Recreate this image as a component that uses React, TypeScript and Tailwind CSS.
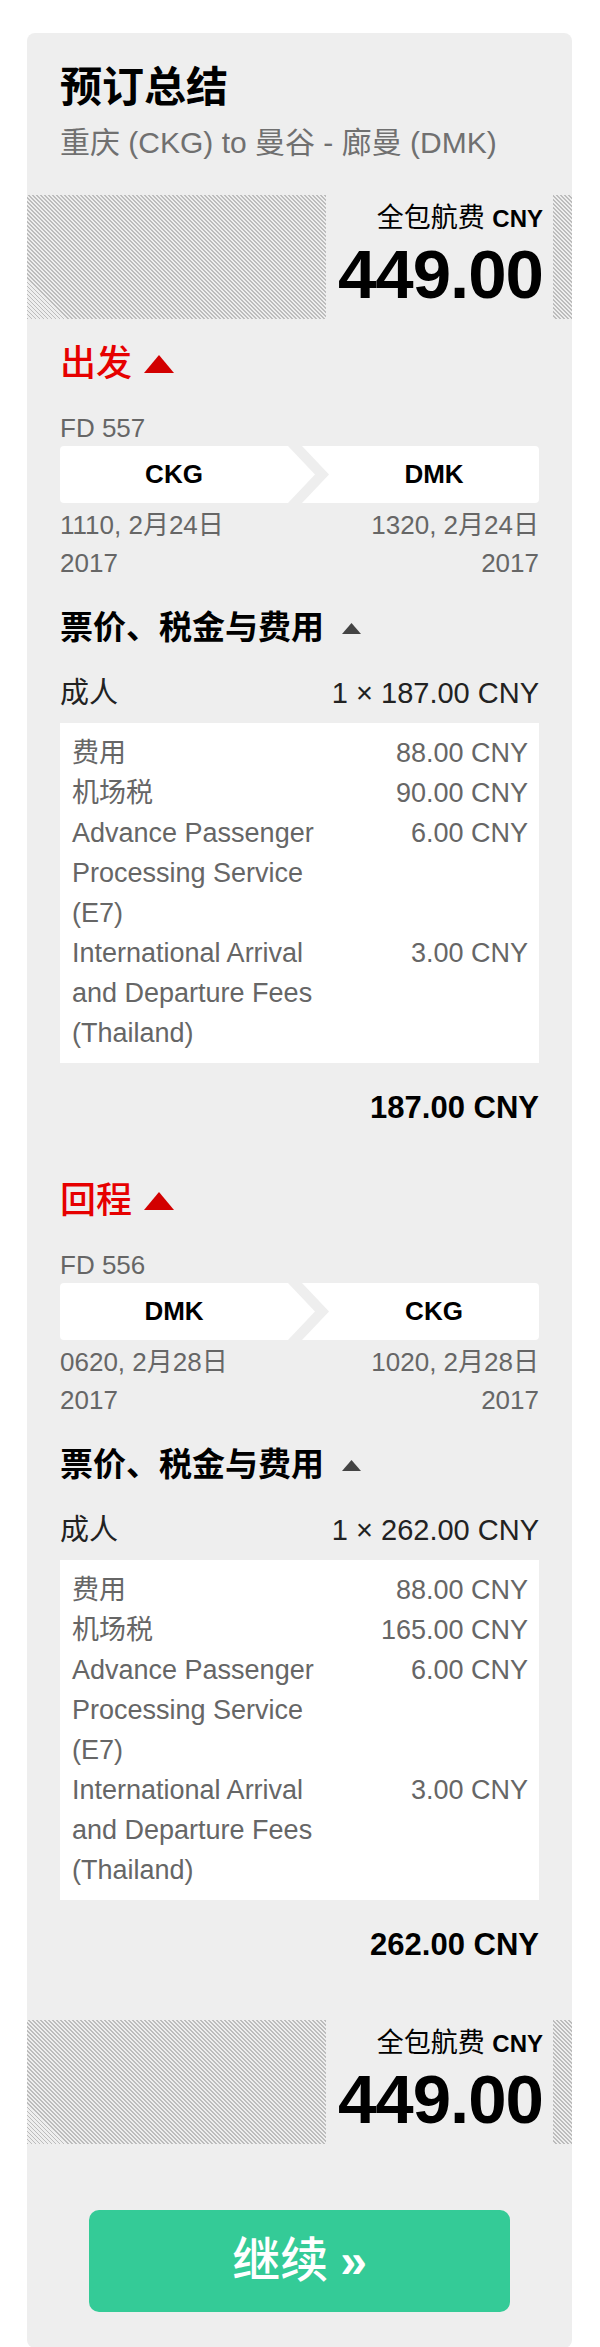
import React from "react";

const FONT = "font-['Liberation_Sans','Noto_Sans_CJK_SC',sans-serif]";
const HATCH =
  "bg-[repeating-linear-gradient(45deg,#bcbcbc_0px,#bcbcbc_1.4px,#eeeeee_1.4px,#eeeeee_2.83px)]";

type Fee = { label: string; amount: string };

type Leg = {
  title: string;
  flight: string;
  from: string;
  to: string;
  depart: [string, string];
  arrive: [string, string];
  adult: string;
  fees: Fee[];
  total: string;
};

const LEGS: Leg[] = [
  {
    title: "出发",
    flight: "FD 557",
    from: "CKG",
    to: "DMK",
    depart: ["1110, 2月24日", "2017"],
    arrive: ["1320, 2月24日", "2017"],
    adult: "1 × 187.00 CNY",
    fees: [
      { label: "费用", amount: "88.00 CNY" },
      { label: "机场税", amount: "90.00 CNY" },
      { label: "Advance Passenger Processing Service (E7)", amount: "6.00 CNY" },
      { label: "International Arrival and Departure Fees (Thailand)", amount: "3.00 CNY" },
    ],
    total: "187.00 CNY",
  },
  {
    title: "回程",
    flight: "FD 556",
    from: "DMK",
    to: "CKG",
    depart: ["0620, 2月28日", "2017"],
    arrive: ["1020, 2月28日", "2017"],
    adult: "1 × 262.00 CNY",
    fees: [
      { label: "费用", amount: "88.00 CNY" },
      { label: "机场税", amount: "165.00 CNY" },
      { label: "Advance Passenger Processing Service (E7)", amount: "6.00 CNY" },
      { label: "International Arrival and Departure Fees (Thailand)", amount: "3.00 CNY" },
    ],
    total: "262.00 CNY",
  },
];

function TotalBand() {
  return (
    <div className={`flex h-[124px] ${HATCH}`}>
      <div className="ml-auto mr-[19px] flex w-[227px] flex-col items-end bg-[#eeeeee] pr-[10px] pt-[8px] text-black">
        <div className="text-[27px] leading-[30px]">
          全包航费 <span className="text-[24px] font-bold">CNY</span>
        </div>
        <div className="mt-[6px] text-[69px] font-bold leading-[69px] tracking-[-1px]">449.00</div>
      </div>
    </div>
  );
}

function RouteBar({ from, to }: { from: string; to: string }) {
  return (
    <div className="mt-px flex h-[57px] rounded-[4px] bg-white text-[26px] font-bold text-black">
      <div className="flex w-[228px] items-center justify-center">{from}</div>
      <svg width="41" height="57" viewBox="0 0 41 57" aria-hidden>
        <polygon points="0,0 14,0 41,28.5 14,57 0,57 27,28.5" fill="#eeeeee" />
      </svg>
      <div className="flex flex-1 items-center justify-center">{to}</div>
    </div>
  );
}

function LegBlock({ leg, first }: { leg: Leg; first: boolean }) {
  return (
    <div className={first ? "mt-[24px]" : "mt-[52px]"}>
      <div className="flex h-[42px] items-center text-[36px] font-medium text-[#e60000]">
        {leg.title}
        <svg width="30" height="18" viewBox="0 0 30 18" className="ml-[12px]" aria-hidden>
          <polygon points="15,0 30,18 0,18" fill="#d20000" />
        </svg>
      </div>

      <div className="mt-[26px] text-[26px] leading-[34px] text-[#666666]">{leg.flight}</div>

      <RouteBar from={leg.from} to={leg.to} />

      <div className="mt-[3px] flex justify-between text-[26px] leading-[38px] text-[#666666]">
        <div>
          <div>{leg.depart[0]}</div>
          <div>{leg.depart[1]}</div>
        </div>
        <div className="text-right">
          <div>{leg.arrive[0]}</div>
          <div>{leg.arrive[1]}</div>
        </div>
      </div>

      <div className="mt-[26px] flex h-[40px] items-center text-[33px] font-bold text-black">
        票价、税金与费用
        <svg width="19" height="11" viewBox="0 0 19 11" className="ml-[18px]" aria-hidden>
          <polygon points="9.5,0 19,11 0,11" fill="#444444" />
        </svg>
      </div>

      <div className="mt-[25px] flex justify-between text-[29px] leading-[40px] text-[#222222]">
        <span>成人</span>
        <span>{leg.adult}</span>
      </div>

      <div className="mt-[10px] bg-white py-[10px] pl-[12px] pr-[11px] text-[27px] leading-[40px] text-[#666666]">
        {leg.fees.map((fee) => (
          <div key={fee.label} className="flex items-start justify-between">
            <span className="w-[255px]">{fee.label}</span>
            <span className="text-right">{fee.amount}</span>
          </div>
        ))}
      </div>

      <div className="mt-[25px] text-right text-[31px] font-bold leading-[40px] text-black">{leg.total}</div>
    </div>
  );
}

export default function App() {
  return (
    <div className={`min-h-screen bg-white pt-[33px] ${FONT}`}>
      <div className="ml-[27px] w-[545px] rounded-[8px] bg-[#eeeeee] pb-[36px] pt-[30px]">
        <div className="px-[33px]">
          <h1 className="text-[42px] font-bold leading-[50px] text-black">预订总结</h1>
          <p className="mt-[12px] text-[30px] leading-[36px] text-[#707070]">重庆 (CKG) to 曼谷 - 廊曼 (DMK)</p>
        </div>

        <div className="mt-[34px]">
          <TotalBand />
        </div>

        <div className="px-[33px]">
          {LEGS.map((leg, i) => (
            <LegBlock key={leg.flight} leg={leg} first={i === 0} />
          ))}
        </div>

        <div className="mt-[55px]">
          <TotalBand />
        </div>

        <div className="px-[33px]">
          <button
            type="button"
            className="mx-auto mt-[66px] flex h-[102px] w-[421px] items-center justify-center rounded-[10px] bg-[#34cb97] text-[48px] font-medium text-white"
          >
            继续 <span className="ml-[12px] font-bold">»</span>
          </button>
        </div>
      </div>
    </div>
  );
}
